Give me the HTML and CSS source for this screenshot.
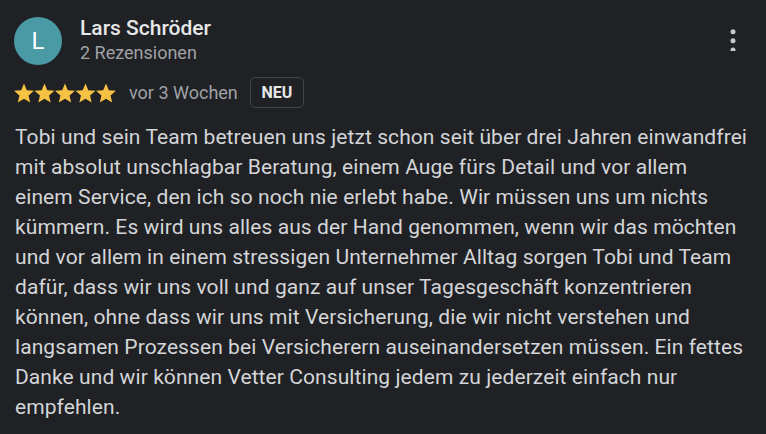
FILE: index.html
```html
<!DOCTYPE html>
<html lang="de">
<head>
  <meta charset="UTF-8" />
  <title>Rezension</title>
  <meta name="viewport" content="width=device-width, initial-scale=1" />
  <link rel="stylesheet" href="styles.css">
</head>
<body>
  <div class="review">
    <div class="review-head">
      <div class="avatar">L</div>
      <div class="author">
        <div class="author-name">Lars Schröder</div>
        <div class="author-meta">2 Rezensionen</div>
      </div>
      <button class="menu" aria-label="Mehr">
        <svg width="24" height="24" viewBox="0 0 24 24">
          <circle cx="12" cy="4.7" r="2.5" fill="#c6c8ca" />
          <circle cx="12" cy="13.85" r="2.5" fill="#c6c8ca" />
          <circle cx="12" cy="23" r="2.5" fill="#c6c8ca" />
        </svg>
      </button>
    </div>

    <div class="rating-row">
      <!-- fünf Sterne, je 20px breit -->
      <svg class="stars" width="102" height="20" viewBox="0 0 102 20">
        <defs>
          <path id="star" d="M12 17.27L18.18 21l-1.64-7.03L22 9.24l-7.19-.61L12 2 9.19 8.63 2 9.24l5.46 4.73L5.82 21z" />
        </defs>
        <use href="#star" transform="translate(-2 -1.5)" />
        <use href="#star" transform="translate(18.5 -1.5)" />
        <use href="#star" transform="translate(39 -1.5)" />
        <use href="#star" transform="translate(59.5 -1.5)" />
        <use href="#star" transform="translate(80 -1.5)" />
      </svg>
      <span class="when">vor 3 Wochen</span>
      <span class="badge">NEU</span>
    </div>

    <p class="review-text">Tobi und sein Team betreuen uns jetzt schon seit über drei Jahren einwandfrei mit absolut unschlagbar Beratung, einem Auge fürs Detail und vor allem einem Service, den ich so noch nie erlebt habe. Wir müssen uns um nichts kümmern. Es wird uns alles aus der Hand genommen, wenn wir das möchten und vor allem in einem stressigen Unternehmer Alltag sorgen Tobi und Team dafür, dass wir uns voll und ganz auf unser Tagesgeschäft konzentrieren können, ohne dass wir uns mit Versicherung, die wir nicht verstehen und langsamen Prozessen bei Versicherern auseinandersetzen müssen. Ein fettes Danke und wir können Vetter Consulting jedem zu jederzeit einfach nur empfehlen.</p>
  </div>
</body>
</html>
```

FILE: styles.css
```css
body { margin: 0; background: #202124; font-family: Roboto, "Noto Sans", sans-serif; color: #e8eaed; }
.review { padding: 17px 14px 0 14px; }
.review-head { display: flex; align-items: flex-start; }
.avatar {
  width: 48px;
  height: 48px;
  border-radius: 50%;
  background: #4a9aa5;
  color: #fff;
  font-size: 24px;
  line-height: 48px;
  text-align: center;
  flex-shrink: 0;
}
.author { margin: -1px 0 0 18px; flex: 1; }
.author-name { font-size: 21px; font-weight: 500; line-height: 25px; color: #e6e7e9; }
.author-meta { font-size: 18px; line-height: 24px; color: #9fa2a6; }
.menu { background: none; border: none; padding: 0; margin: 10px 7px 0 0; cursor: pointer; }
.rating-row { display: flex; align-items: center; margin-top: 12px; height: 31px; }
.stars { fill: #f6c244; flex-shrink: 0; }
.when { font-size: 18px; color: #9fa2a6; margin-left: 13px; }
.badge {
  margin-left: 12px;
  box-sizing: border-box;
  width: 54px;
  height: 31px;
  display: flex;
  align-items: center;
  justify-content: center;
  border: 1px solid #414448;
  border-radius: 5px;
  font-size: 16px;
  font-weight: 700;
  color: #e6e7e9;
}
.review-text { margin: 14px 4px 0 1px; font-size: 21px; line-height: 30px; letter-spacing: 0.08px; color: #d3d5d8; }
```
